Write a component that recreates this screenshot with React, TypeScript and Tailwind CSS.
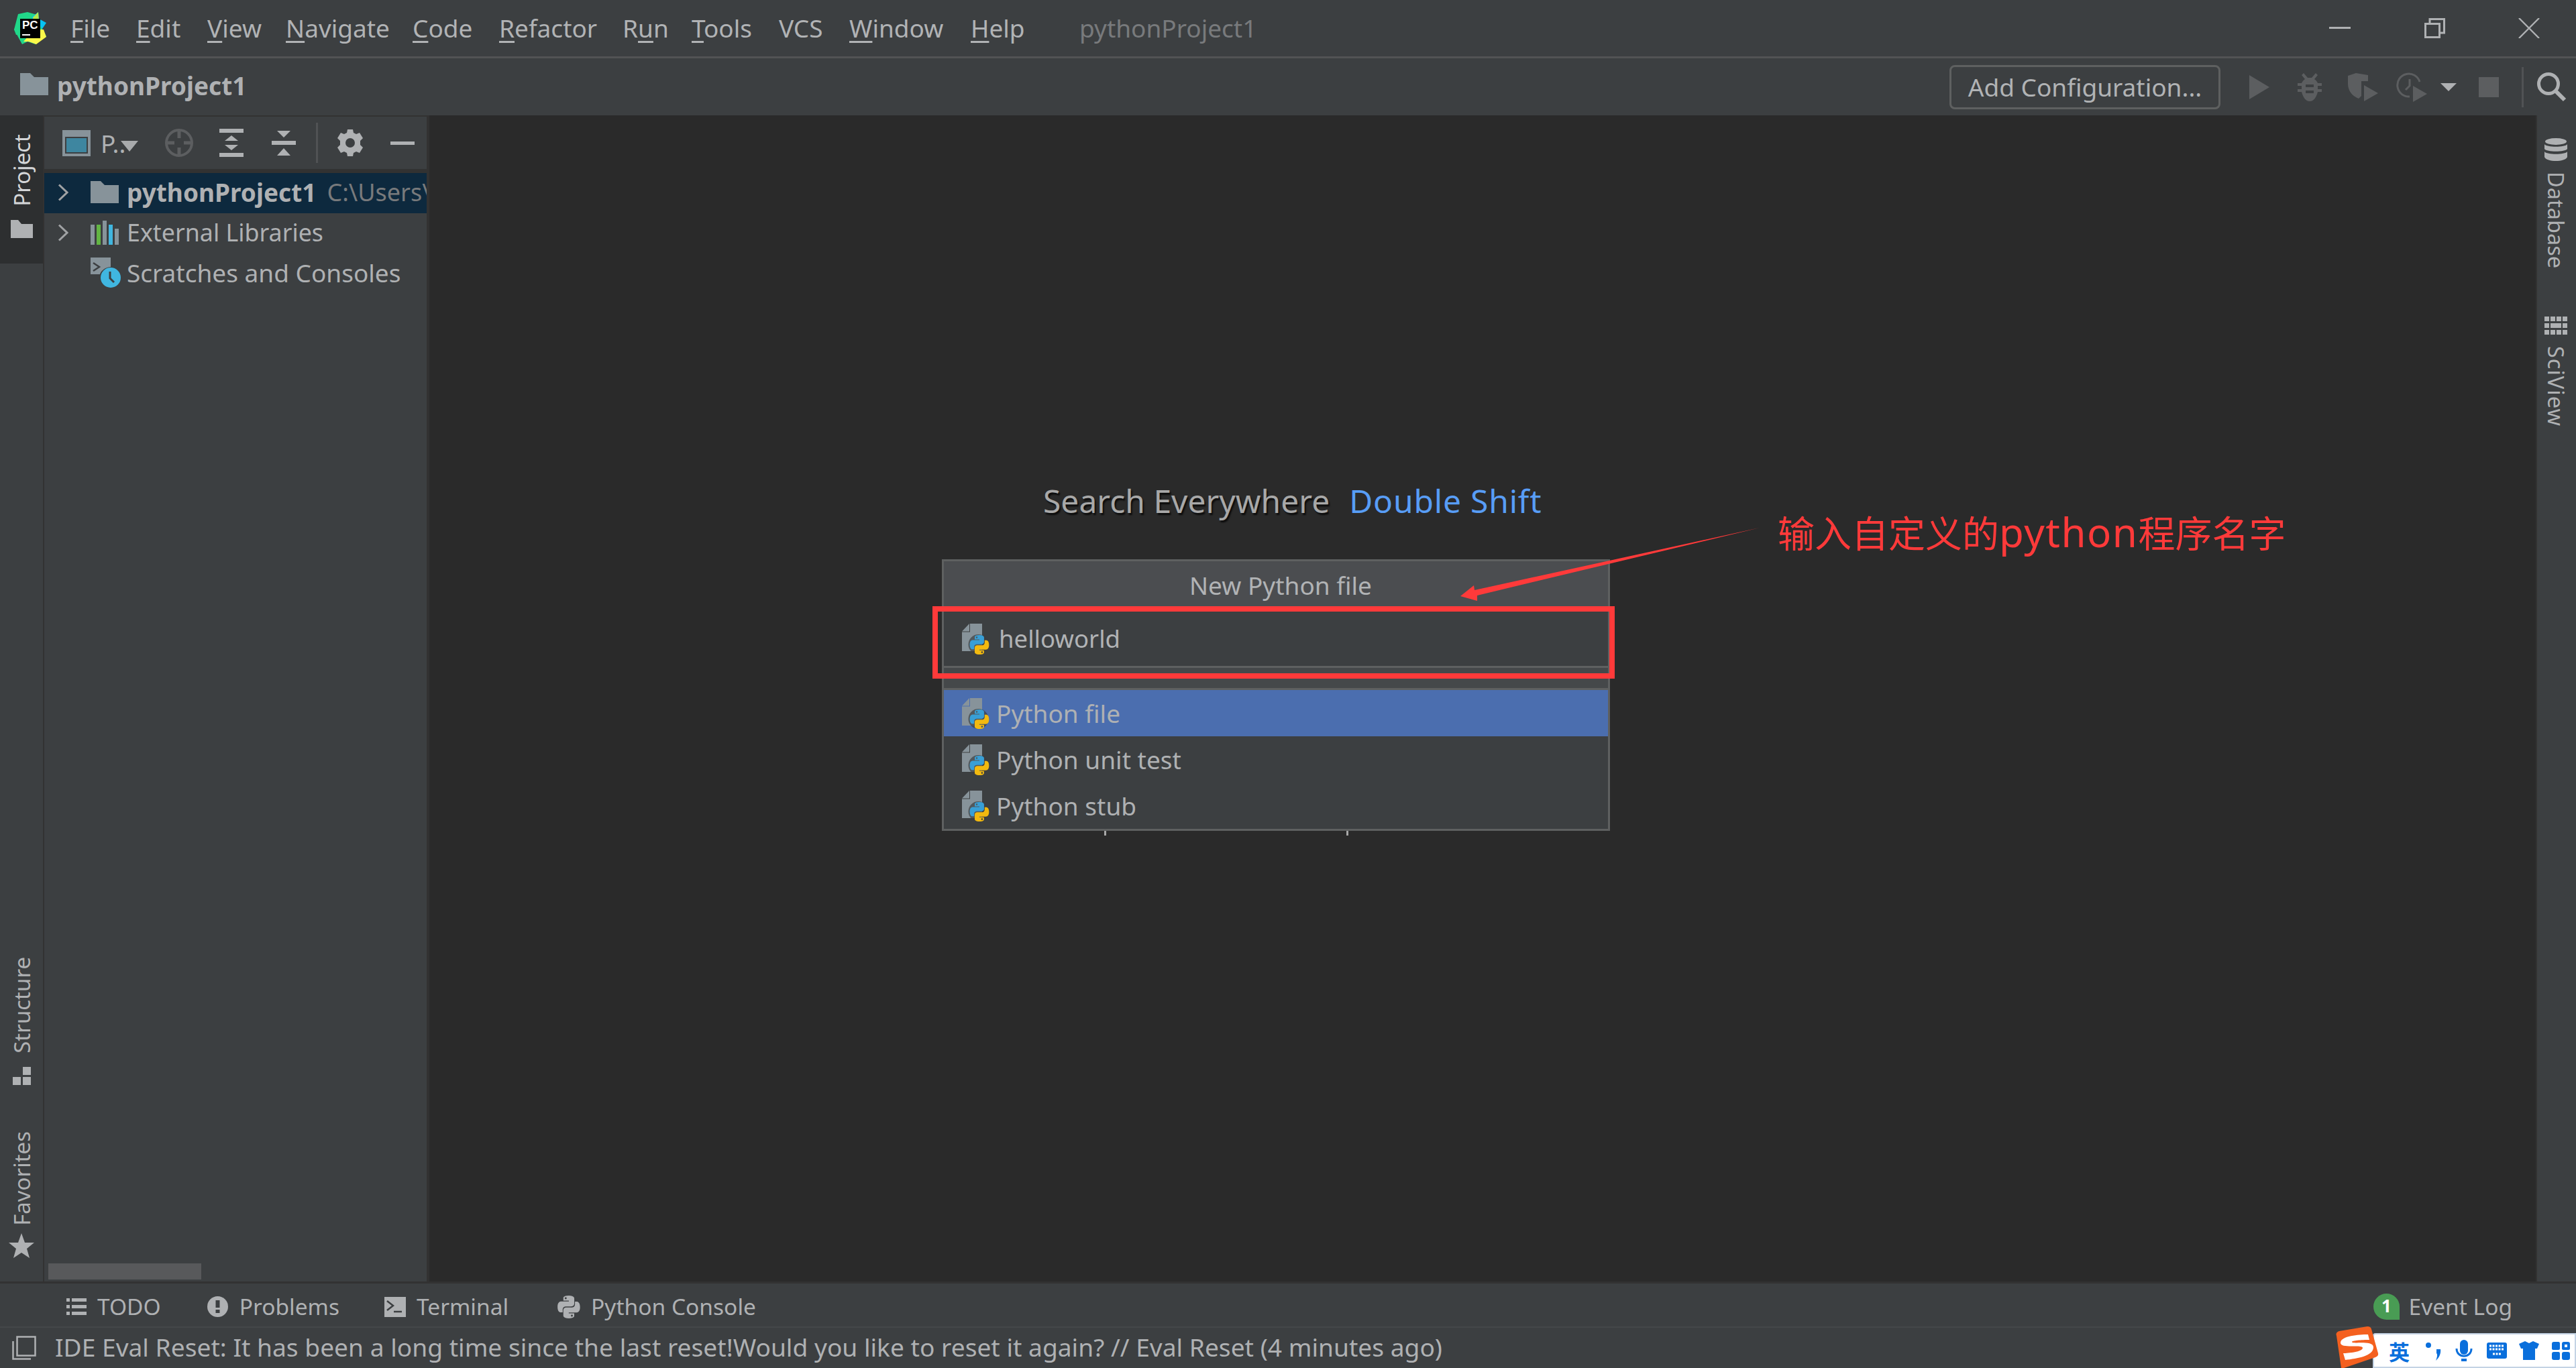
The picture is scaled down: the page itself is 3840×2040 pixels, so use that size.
import React from "react";

const DIS = "#5c5e60";
const ICON = "#afb1b3";

function Snake({ a, b }: { a: string; b: string }) {
  const d = "M54.9 0C27 0 28.7 12 28.7 12L28.8 24.5H55.4V28.2H18.2S.4 26.2.4 54.3 16 81.4 16 81.4H25.3V68.3S24.8 52.7 40.6 52.7H67S81.8 52.9 81.8 38.4V14.4S84 0 54.9 0ZM40.2 8.4a4.8 4.8 0 1 1 0 9.6a4.8 4.8 0 1 1 0-9.6Z";
  return (
    <>
      <path d={d} fill={a} fillRule="evenodd" />
      <path d={d} fill={b} fillRule="evenodd" transform="rotate(180 55.2 55.5)" />
    </>
  );
}

function PyFile() {
  return (
    <svg width="42" height="46" viewBox="0 0 42 46" className="shrink-0">
      <path d="M0 11.5 11 0V11.5Z M12 0H30V41H0V12.5H12Z" fill="#87939a" />
      <circle cx="24.5" cy="31" r="15" fill="#3c3f41" opacity="0.7" />
      <g transform="translate(11.5 17) scale(0.262)">
        <Snake a="#389fd6" b="#f2b90f" />
      </g>
    </svg>
  );
}

function Folder({ w = 42, h = 33, c = "#87939a" }: { w?: number; h?: number; c?: string }) {
  return (
    <svg width={w} height={h} viewBox="0 0 42 33" className="shrink-0">
      <path d="M0 0H15L21 6H42V33H0Z" fill={c} />
    </svg>
  );
}

function Chevron() {
  return (
    <svg width="16" height="26" viewBox="0 0 16 26" className="shrink-0">
      <path d="M2 1.5 14 13 2 24.5" fill="none" stroke="#a0a2a4" strokeWidth="3" />
    </svg>
  );
}

function Logo() {
  return (
    <svg width="48" height="48" viewBox="0 0 48 48" className="shrink-0">
      <path d="M6 3 20 0 34 4 30 30 3 34 0 26Z" fill="#21d789" />
      <path d="M27 7 36 0 37 10 48 16 40 28 24 28Z" fill="#07c3f2" />
      <path d="M28 8 36 0 37 14 30 22Z" fill="#b6e84a" />
      <path d="M0 26 12 12 40 22 48 36 32 48 20 44 12 48Z" fill="#21d789" />
      <path d="M14 44 30 26 44 26 48 37 33 48 22 44Z" fill="#fcf84a" />
      <rect x="9" y="10" width="30" height="29" fill="#000" />
      <text x="12" y="25" fontSize="17" fontWeight="700" fill="#fff" fontFamily="'Liberation Sans',sans-serif">PC</text>
      <rect x="12" y="33" width="12" height="2" fill="#fff" />
    </svg>
  );
}

const Under = ({ children }: { children: React.ReactNode }) => (
  <span className="underline decoration-[3px] underline-offset-[5px]">{children}</span>
);

function MenuBar() {
  return (
    <div className="flex h-[84px] items-center pl-[21px] text-[37px] text-[#b1b3b5]">
      <Logo />
      <div className="ml-[36px] flex items-center">
        <span className="w-[98px]"><Under>F</Under>ile</span>
        <span className="w-[106px]"><Under>E</Under>dit</span>
        <span className="w-[117px]"><Under>V</Under>iew</span>
        <span className="w-[189px]"><Under>N</Under>avigate</span>
        <span className="w-[129px]"><Under>C</Under>ode</span>
        <span className="w-[184px]"><Under>R</Under>efactor</span>
        <span className="w-[103px]">R<Under>u</Under>n</span>
        <span className="w-[130px]"><Under>T</Under>ools</span>
        <span className="w-[105px]">VCS</span>
        <span className="w-[181px]"><Under>W</Under>indow</span>
        <span className="w-[162px]"><Under>H</Under>elp</span>
        <span className="text-[#787a7c]">pythonProject1</span>
      </div>
      <div className="ml-auto flex items-center pr-[54px]">
        <svg width="32" height="4" viewBox="0 0 32 4" className="mr-[110px]"><rect width="32" height="3" fill={ICON} /></svg>
        <svg width="31" height="30" viewBox="0 0 31 30" className="mr-[109px]">
          <path d="M1.5 8.5H22.5V28.5H1.5Z M8 8V1.5H29.5V22H23" fill="none" stroke={ICON} strokeWidth="3" />
        </svg>
        <svg width="32" height="30" viewBox="0 0 32 30">
          <path d="M1 0 31 30M31 0 1 30" fill="none" stroke={ICON} strokeWidth="2.4" />
        </svg>
      </div>
    </div>
  );
}

function NavBar() {
  return (
    <div className="flex h-[88px] items-center border-t-[3px] border-[#525354] pl-[30px] text-[#afb1b3]">
      <span className="mb-[8px]"><Folder /></span>
      <span className="mb-[3px] ml-[13px] text-[37px] font-bold">pythonProject1</span>
      <div className="ml-auto flex items-center pr-[14px]">
        <div className="flex h-[66px] w-[404px] items-center justify-center rounded-[8px] border-[3px] border-[#5e6060] text-[37px] text-[#b1b3b5]">
          Add Configuration...
        </div>
        <svg width="30" height="36" viewBox="0 0 30 36" className="ml-[43px]"><path d="M0 0 30 18 0 36Z" fill={DIS} /></svg>
        <svg width="36" height="42" viewBox="0 0 36 42" className="ml-[42px]">
          <path d="M9 0 15 7H21L27 0 30 3 25 9C28 11 29 13 30 15H36V19H30V24H36V28H30C28 36 24 42 18 42S8 36 6 28H0V24H6V19H0V15H6C7 13 8 11 11 9L6 3Z M12 17V21H24V17Z M12 26V30H24V26Z" fill={DIS} fillRule="evenodd" />
        </svg>
        <svg width="45" height="42" viewBox="0 0 45 42" className="ml-[39px]">
          <path d="M0 4 12 0 30 3V12H20V34L16 38C6 34 0 26 0 16Z" fill={DIS} />
          <path d="M24 18 45 30 24 42Z" fill={DIS} />
        </svg>
        <svg width="46" height="44" viewBox="0 0 46 44" className="ml-[27px]">
          <path d="M20 36a17 17 0 1 1 15-22" fill="none" stroke={DIS} strokeWidth="3" />
          <path d="M20 10V20L14 26" fill="none" stroke={DIS} strokeWidth="3" />
          <path d="M25 20 46 32 25 44Z" fill={DIS} />
        </svg>
        <svg width="24" height="12" viewBox="0 0 24 12" className="ml-[20px]"><path d="M0 0H24L12 12Z" fill={ICON} /></svg>
        <svg width="30" height="30" viewBox="0 0 30 30" className="ml-[33px]"><rect width="30" height="30" fill={DIS} /></svg>
        <div className="ml-[34px] h-[60px] w-[3px] bg-[#505254]" />
        <svg width="44" height="44" viewBox="0 0 44 44" className="ml-[20px]">
          <circle cx="17" cy="17" r="14.5" fill="none" stroke={ICON} strokeWidth="5" />
          <path d="M27 27 41 41" stroke={ICON} strokeWidth="6" />
        </svg>
      </div>
    </div>
  );
}

const Vert = ({ children }: { children: React.ReactNode }) => (
  <span className="rotate-180 text-[33px] leading-none [writing-mode:vertical-rl]">{children}</span>
);

function LeftStrip() {
  return (
    <div className="flex w-[66px] shrink-0 flex-col border-r-[2px] border-[#323232] text-[#afb1b3]">
      <div className="flex h-[221px] flex-col items-center bg-[#2d2f30] pt-[28px] text-[#d4d6d8]">
        <Vert>Project</Vert>
        <svg width="33" height="27" viewBox="0 0 33 27" className="mt-[20px]"><path d="M0 0H11L16 6H33V27H0Z" fill="#afb1b3" /></svg>
      </div>
      <div className="mt-auto flex flex-col items-center pb-[35px]">
        <Vert>Structure</Vert>
        <svg width="27" height="27" viewBox="0 0 27 27" className="mt-[20px]">
          <path d="M15 0H27V12H15ZM0 15H12V27H0ZM15 15H27V27H15Z" fill={ICON} />
        </svg>
        <div className="mt-[69px] flex"><Vert>Favorites</Vert></div>
        <svg width="38" height="37" viewBox="0 0 38 37" className="mt-[11px]">
          <path d="M19 0 24 14H38L27 23 31 37 19 29 7 37 11 23 0 14H14Z" fill={ICON} />
        </svg>
      </div>
    </div>
  );
}

function PanelToolbar() {
  return (
    <div className="flex h-[80px] shrink-0 items-center border-t-[2px] border-[#323232] pl-[27px]">
      <svg width="42" height="39" viewBox="0 0 42 39" className="shrink-0">
        <rect width="42" height="39" fill="#87939a" />
        <rect x="4" y="10" width="34" height="25" fill="#3c3f41" />
        <rect x="6" y="12" width="30" height="21" fill="#3e86a0" />
      </svg>
      <span className="relative ml-[15px] w-[72px] text-[37px] leading-none text-[#afb1b3]">
        P..
        <svg width="26" height="16" viewBox="0 0 26 16" className="absolute left-[30px] top-[15px]"><path d="M0 0H26L13 16Z" fill="#a8aaac" /></svg>
      </span>
      <svg width="42" height="42" viewBox="0 0 42 42" className="ml-[24px] shrink-0">
        <circle cx="21" cy="21" r="19" fill="none" stroke={DIS} strokeWidth="4" />
        <path d="M21 2V14M21 28V40M2 21H14M28 21H40" stroke={DIS} strokeWidth="5" />
      </svg>
      <svg width="36" height="42" viewBox="0 0 36 42" className="ml-[39px] shrink-0">
        <path d="M0 0H36V6H0ZM18 10 28 18H8ZM8 24H28L18 32ZM0 36H36V42H0Z" fill={ICON} />
      </svg>
      <svg width="36" height="37" viewBox="0 0 36 37" className="ml-[42px] shrink-0">
        <path d="M8 0H28L18 10ZM0 15H36V21H0ZM18 26 28 37H8Z" fill={ICON} />
      </svg>
      <div className="ml-[30px] h-[60px] w-[3px] shrink-0 bg-[#505254]" />
      <svg width="38" height="40" viewBox="0 0 38 40" className="ml-[29px] shrink-0">
        <path
          fillRule="evenodd"
          fill={ICON}
          d="M15 0H23L24 5 28 7 33 5 38 13 34 17V23L38 27 33 35 28 33 24 35 23 40H15L14 35 10 33 5 35 0 27 4 23V17L0 13 5 5 10 7 14 5ZM19 13a7 7 0 1 0 0 14a7 7 0 1 0 0-14Z"
        />
      </svg>
      <div className="ml-[41px] h-[5px] w-[36px] shrink-0 bg-[#afb1b3]" />
    </div>
  );
}

function TreeRow({ sel, children }: { sel?: boolean; children: React.ReactNode }) {
  return (
    <div className={`flex h-[60px] items-center overflow-hidden whitespace-nowrap pb-[3px] pl-[20px] text-[37px] text-[#afb1b3] ${sel ? "bg-[#0d293e]" : ""}`}>
      {children}
    </div>
  );
}

function ProjectPanel() {
  return (
    <div className="flex w-[574px] shrink-0 flex-col border-r-[4px] border-[#323232] bg-[#3c3f41]">
      <PanelToolbar />
      <div className="h-[6px] shrink-0 bg-[#323232]" />
      <TreeRow sel>
        <Chevron />
        <span className="ml-[33px]"><Folder /></span>
        <span className="ml-[12px] font-bold">pythonProject1</span>
        <span className="ml-[16px] text-[36px] text-[#787a7c]">C:\Users\</span>
      </TreeRow>
      <TreeRow>
        <Chevron />
        <svg width="42" height="36" viewBox="0 0 42 36" className="ml-[33px] shrink-0">
          <rect y="6" width="6" height="30" fill="#87939a" />
          <rect x="9" y="6" width="6" height="30" fill="#62b543" />
          <rect x="18" width="6" height="36" fill="#87939a" />
          <rect x="27" y="6" width="6" height="30" fill="#40b6e0" />
          <rect x="36" y="12" width="6" height="24" fill="#87939a" />
        </svg>
        <span className="ml-[12px] text-[35.8px]">External Libraries</span>
      </TreeRow>
      <TreeRow>
        <svg width="45" height="45" viewBox="0 0 45 45" className="ml-[49px] shrink-0">
          <path d="M0 0H30V14C20 15 15 21 14 25H0Z" fill="#87939a" />
          <path d="M4 8 13 14 4 20" fill="none" stroke="#3c3f41" strokeWidth="2.5" />
          <circle cx="30" cy="30" r="15" fill="#40b6e0" />
          <path d="M29 21V31L35 37" fill="none" stroke="#3c3f41" strokeWidth="3" />
        </svg>
        <span className="ml-[9px]">Scratches and Consoles</span>
      </TreeRow>
      <div className="mt-auto pb-[3px] pl-[6px]">
        <div className="h-[24px] w-[228px] bg-[#58595b]" />
      </div>
    </div>
  );
}

function ListRow({ sel, label }: { sel?: boolean; label: string }) {
  return (
    <div className={`flex h-[69px] items-center pl-[27px] text-[37px] text-[#afb1b3] ${sel ? "bg-[#4b6eaf]" : ""}`}>
      <PyFile />
      <span className="ml-[9px]">{label}</span>
    </div>
  );
}

function Popup() {
  return (
    <div className="absolute left-[764px] top-[662px] w-[996px] border-[3px] border-[#5e6060] bg-[#3c3f41]">
      <div className="flex h-[75px] items-center justify-center bg-[#4b4d50] pb-[3px] pl-[14px] text-[37px] text-[#b1b3b5]">New Python file</div>
      <div className="flex h-[84px] items-center border-b-[3px] border-[#5e6060] pl-[27px] text-[36.5px] text-[#b1b3b5]">
        <PyFile />
        <span className="ml-[13px]">helloworld</span>
      </div>
      <div className="h-[33px] border-b-[3px] border-[#5e6060] bg-[#45484a]" />
      <ListRow sel label="Python file" />
      <ListRow label="Python unit test" />
      <ListRow label="Python stub" />
    </div>
  );
}

function Editor() {
  return (
    <div className="relative min-w-0 flex-1 bg-[#2a2a2a]">
      <div className="flex pl-[915px] pt-[546px] text-[48px] leading-[58px]">
        <span className="text-[#a8a8a8] [text-shadow:2px_3px_2px_#0c0c0c]">Search Everywhere</span>
        <span className="ml-[29px] tracking-[0.8px] text-[#589df6]">Double Shift</span>
      </div>
      <div className="absolute left-[1006px] top-[1067px] h-[7px] w-[3px] bg-[#a8a8a8]" />
      <div className="absolute left-[1367px] top-[1067px] h-[7px] w-[3px] bg-[#a8a8a8]" />
      <Popup />
      <div className="absolute left-[750px] top-[732px] h-[108px] w-[1017px] border-[8px] border-[#ff3a3a]" />
      <svg width="460" height="130" viewBox="0 0 460 130" className="absolute left-[1530px] top-[600px]">
        <path d="M7 117 27 101 28 108 453 15 32 116 32 124Z" fill="#ff3a3a" />
      </svg>
      <span className="absolute left-[2010px] top-[582px] whitespace-nowrap text-[55px] leading-[76px] text-[#ff3a3a] font-['Noto_Sans_CJK_SC','Noto_Sans',sans-serif]">
        输入自定义的<span className="font-['Noto_Sans',sans-serif] text-[60px] leading-[60px] tracking-[1.5px]">python</span>程序名字
      </span>
    </div>
  );
}

function RightStrip() {
  return (
    <div className="flex w-[60px] shrink-0 flex-col items-center border-l-[2px] border-[#323232] bg-[#3c3f41] pr-[2px] pt-[33px] text-[#afb1b3]">
      <svg width="34" height="36" viewBox="0 0 34 36">
        <ellipse cx="17" cy="6" rx="16" ry="5" fill={ICON} />
        <path d="M0 10C3 15 31 15 34 10V17C31 22 3 22 0 17ZM0 21C3 26 31 26 34 21V29C31 37 3 37 0 29Z" fill={ICON} />
      </svg>
      <span className="mt-[15px] text-[32.5px] leading-none [writing-mode:vertical-rl]">Database</span>
      <svg width="34" height="27" viewBox="0 0 34 27" className="mt-[72px]">
        <path d="M0 0H7V7H0ZM9 0H16V7H9ZM18 0H25V7H18ZM27 0H34V7H27ZM0 10H7V17H0ZM27 10H34V17H27ZM9 10H25V17H9ZM0 20H7V27H0ZM9 20H16V27H9ZM18 20H25V27H18ZM27 20H34V27H27Z" fill={ICON} />
      </svg>
      <span className="mt-[17px] text-[32.5px] leading-none tracking-[1px] [writing-mode:vertical-rl]">SciView</span>
    </div>
  );
}

function ToolBottom() {
  return (
    <div className="flex h-[64px] shrink-0 items-center pl-[99px] pt-[5px] text-[33.5px] text-[#afb1b3]">
      <svg width="30" height="25" viewBox="0 0 30 25" className="shrink-0">
        <path d="M0 0H5V5H0ZM8 0H30V5H8ZM0 10H5V15H0ZM8 10H30V15H8ZM0 20H5V25H0ZM8 20H30V25H8Z" fill={ICON} />
      </svg>
      <span className="ml-[16px]">TODO</span>
      <svg width="31" height="31" viewBox="0 0 31 31" className="ml-[69px] shrink-0">
        <circle cx="15.5" cy="15.5" r="15.5" fill={ICON} />
        <path d="M12.5 6H18.5V17H12.5ZM12.5 20H18.5V25H12.5Z" fill="#3c3f41" />
      </svg>
      <span className="ml-[17px]">Problems</span>
      <svg width="32" height="30" viewBox="0 0 32 30" className="ml-[67px] shrink-0">
        <rect width="32" height="30" fill={ICON} />
        <path d="M4 6 13 13 4 20" fill="none" stroke="#3c3f41" strokeWidth="2.5" />
        <path d="M14 22H26" stroke="#3c3f41" strokeWidth="2.5" />
      </svg>
      <span className="ml-[16px]">Terminal</span>
      <svg width="34" height="34" viewBox="0 0 111 111" className="ml-[73px] shrink-0">
        <Snake a={ICON} b={ICON} />
      </svg>
      <span className="ml-[16px]">Python Console</span>
      <svg width="39" height="39" viewBox="0 0 39 39" className="ml-auto shrink-0">
        <path d="M19.5 0A19.5 19.5 0 0 1 39 19.5V39H19.5A19.5 19.5 0 0 1 19.5 0Z" fill="#499c54" />
        <text x="19.5" y="28" textAnchor="middle" fontSize="26" fontWeight="700" fill="#fff" fontFamily="'Noto Sans',sans-serif">1</text>
      </svg>
      <span className="ml-[14px] mr-[95px]">Event Log</span>
    </div>
  );
}

function Sogou() {
  const blue = "#0a6fdc";
  return (
    <div className="absolute bottom-0 right-0 flex h-[60px] w-[356px] items-end">
      <div className="relative h-[52px] w-full">
        <div className="absolute bottom-0 right-0 flex h-[52px] w-[303px] items-center rounded-tl-[4px] border-[2px] border-[#c4d3e4] bg-white pl-[22px]">
          <span className="text-[31px] font-bold leading-none text-[#0a6fdc] font-['Noto_Sans_CJK_SC',sans-serif]">英</span>
          <svg width="24" height="32" viewBox="0 0 24 32" className="ml-[23px]">
            <circle cx="5" cy="8" r="4" fill={blue} />
            <path d="M17 14H23C24 20 21 27 16 31 18 26 19 22 17 20Z" fill={blue} />
          </svg>
          <svg width="26" height="32" viewBox="0 0 26 32" className="ml-[21px]">
            <rect x="7" width="12" height="22" rx="6" fill={blue} />
            <path d="M2 13C2 28 24 28 24 13" fill="none" stroke={blue} strokeWidth="3" />
            <rect x="9" y="28" width="8" height="4" fill={blue} />
          </svg>
          <svg width="30" height="24" viewBox="0 0 30 24" className="ml-[21px]">
            <rect width="30" height="24" rx="3" fill={blue} />
            <path d="M4 5H26M4 10H26M9 17H21" stroke="#fff" strokeWidth="3" strokeDasharray="3 1.5" />
          </svg>
          <svg width="30" height="28" viewBox="0 0 30 28" className="ml-[18px]">
            <path d="M9 0 15 3 21 0 30 4 27 11H24V28H6V11H3L0 4Z" fill={blue} />
          </svg>
          <svg width="27" height="27" viewBox="0 0 27 27" className="ml-[19px]">
            <path d="M3 0H10Q12 0 12 3V10Q12 12 10 12H3Q0 12 0 10V3Q0 0 3 0ZM18 0H24Q27 0 27 3V10Q27 12 24 12H18Q15 12 15 10V3Q15 0 18 0ZM3 15H10Q12 15 12 18V24Q12 27 10 27H3Q0 27 0 24V18Q0 15 3 15ZM18 15H24Q27 15 27 18V24Q27 27 24 27H18Q15 27 15 24V18Q15 15 18 15ZM19 4V8H23V4Z" fill={blue} fillRule="evenodd" />
          </svg>
        </div>
        <svg width="66" height="62" viewBox="0 0 66 62" className="absolute bottom-0 left-[-4px]">
          <path d="M3 14Q1 9 7 7L49 0Q54 0 55 4L65 40Q66 44 61 46L14 62H10Z" fill="#f4601f" />
          <path d="M50 12C36 12 10 14 9 24 8 34 42 26 42 32 42 38 20 40 13 40L16 50C34 48 58 44 58 31 58 20 26 27 26 23 26 21 40 20 52 20Z" fill="#fff" />
        </svg>
      </div>
    </div>
  );
}

function Status() {
  return (
    <div className="relative flex h-[62px] shrink-0 items-center border-t-[2px] border-[#45484a] pl-[18px] text-[37.15px] text-[#afb1b3]">
      <svg width="36" height="36" viewBox="0 0 36 36" className="shrink-0">
        <path d="M7.5 1.5H34.5V29.5H7.5Z" fill="none" stroke={ICON} strokeWidth="2.5" />
        <path d="M1.5 8V34.5H28" fill="none" stroke={ICON} strokeWidth="2.5" />
      </svg>
      <span className="mb-[3px] ml-[28px] whitespace-nowrap">IDE Eval Reset: It has been a long time since the last reset!Would you like to reset it again? // Eval Reset (4 minutes ago)</span>
      <Sogou />
    </div>
  );
}

export default function App() {
  return (
    <div className="flex h-[2040px] w-[3840px] flex-col overflow-hidden bg-[#3c3f41] font-['Noto_Sans','Open_Sans',sans-serif]">
      <MenuBar />
      <NavBar />
      <div className="flex min-h-0 flex-1">
        <LeftStrip />
        <ProjectPanel />
        <Editor />
        <RightStrip />
      </div>
      <div className="h-[3px] shrink-0 bg-[#323232]" />
      <ToolBottom />
      <Status />
    </div>
  );
}
